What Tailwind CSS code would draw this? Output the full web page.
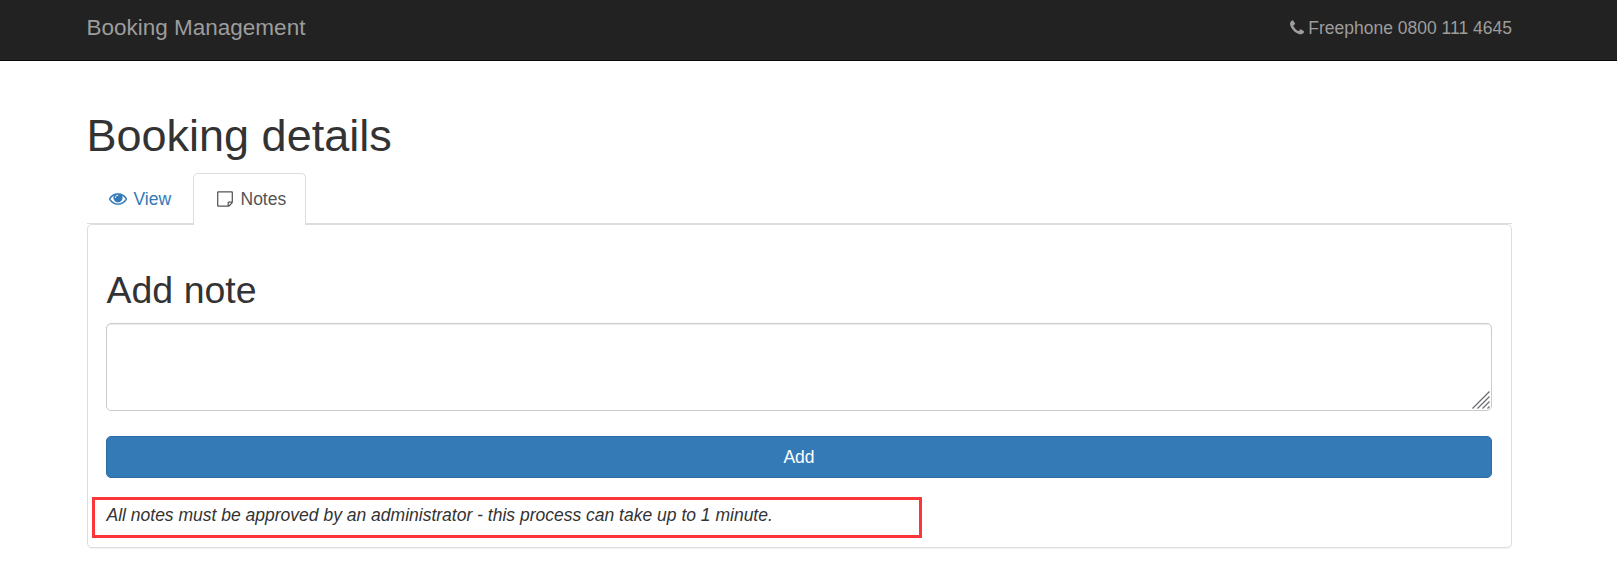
<!DOCTYPE html>
<html lang="en">
<head>
<meta charset="utf-8">
<title>Booking Management</title>
<script src="https://cdn.jsdelivr.net/npm/@tailwindcss/browser@4"></script>
</head>
<body class="bg-white text-[#333] text-[17.5px] leading-[25px] font-['Liberation_Sans',Arial,sans-serif] h-[584px] overflow-hidden">
<nav class="h-[61px] bg-[#222] border-b border-[#080808] text-[#9d9d9d]">
  <div class="ml-[87px] w-[1425px] h-[57px] flex items-center justify-between">
    <a class="text-[22.5px] -ml-[0.5px] pb-0.5">Booking Management</a>
    <p class="flex items-center">
      <svg class="w-[14px] h-[18px] mr-[4.5px] -mt-px" viewBox="192 0 1408 1792" fill="currentColor"><path d="M1600 1240q0 27-10 70.5t-21 68.5q-21 50-122 106-94 51-186 51-27 0-53-3.5t-57.5-12.5-47-14.5-55.5-20.5-49-18q-98-35-175-83-127-79-264-216t-216-264q-48-77-83-175-3-9-18-49t-20.5-55.5-14.5-47-12.5-57.5-3.5-53q0-92 51-186 56-101 106-122 25-11 68.5-21t70.5-10q14 0 21 3 18 6 53 76 11 19 30 54t35 63.5 31 53.5q3 4 17.5 25t21.5 35.5 7 28.5q0 20-28.5 50t-62 55-62 53-28.5 46q0 9 5 22.5t8.5 20.5 14 24 11.5 19q76 137 174 235t235 174q2 1 19 11.5t24 14 20.5 8.5 22.5 5q18 0 46-28.5t53-62 55-62 50-28.5q14 0 28.5 7t35.5 21.5 25 17.5q25 15 53.5 31t63.5 35 54 30q70 35 76 53 3 7 3 21z"/></svg>
      <span>Freephone 0800 111 4645</span>
    </p>
  </div>
</nav>
<main class="ml-[87px] w-[1425px] pt-[50px]">
  <h1 class="-ml-[0.5px] text-[45px] leading-[50px] font-medium">Booking details</h1>
  <ul class="mt-3 h-[51px] flex border-b border-[#ddd]">
    <li class="w-[106px] pl-[22px] pt-[2px] flex items-center text-[#337ab7]">
      <svg class="w-[18px] h-[18px] mr-[6.5px] shrink-0" viewBox="0 64 1792 1792" fill="currentColor" stroke="currentColor" stroke-width="20"><path d="M1664 960q-152-236-381-353 61 104 61 225 0 185-131.5 316.5t-316.5 131.5-316.5-131.5-131.5-316.5q0-121 61-225-229 117-381 353 133 205 333.5 326.5t434.5 121.5 434.5-121.5 333.5-326.5zm-720-384q0-20-14-34t-34-14q-125 0-214.5 89.5t-89.5 214.5q0 20 14 34t34 14 34-14 14-34q0-86 61-147t147-61q20 0 34-14t14-34zm848 384q0 34-20 69-140 230-376.5 368.5t-499.5 138.5-499.5-139-376.5-368q-20-35-20-69t20-69q140-229 376.5-368t499.5-139 499.5 139 376.5 368q20 35 20 69z"/></svg>
      <span>View</span>
    </li>
    <li class="w-[113px] h-[52px] z-10 pl-[22.5px] pb-px flex items-center text-[#555] bg-white border border-b-0 border-[#ddd] rounded-t-[5px]">
      <svg class="w-4 h-4 mr-2 -mt-px shrink-0" viewBox="0 0 16 16" fill="none" stroke="currentColor" stroke-width="1.25" stroke-linejoin="round"><path d="M1.2.8h13.6q.5 0 .5.5v9.5q0 .8-.5 1.3l-2.6 2.6q-.5.5-1.3.5H1.2q-.5 0-.5-.5V1.3q0-.5.5-.5zM15.2 11h-3.4q-.6 0-.6.6v3.5"/></svg>
      <span>Notes</span>
    </li>
  </ul>
  <section class="h-[324px] border border-[#ddd] rounded-[5px] shadow-[0_1px_1px_rgba(0,0,0,0.05)] pl-[18px] pr-[19px]">
    <h2 class="pl-[0.5px] pt-[44px] text-[37.5px] leading-[42px] font-medium">Add note</h2>
    <div class="relative mt-3 h-[88px]">
      <textarea class="block w-full h-full resize-none bg-white border border-[#ccc] rounded-[5px] shadow-[inset_0_1px_1px_rgba(0,0,0,0.075)]"></textarea>
      <svg class="absolute right-[2px] bottom-[2px] w-[18px] h-[18px]" viewBox="0 0 18 18" fill="none" stroke="#6e6e73" stroke-width="1.3"><path d="M.5 17.5l17-17M5.5 17.5l12-12M10.5 17.5l7-7M15.5 17.5l2-2"/></svg>
    </div>
    <button class="block w-full h-[42px] mt-[25px] bg-[#337ab7] border border-[#2e6da4] rounded-[5px] text-white">Add</button>
    <div class="-ml-[14px] mt-[19px] w-[830px] h-[41px] border-3 border-[#fb3639] pl-[11.5px] pt-[3px] italic">All notes must be approved by an administrator - this process can take up to 1 minute.</div>
  </section>
</main>
</body>
</html>
